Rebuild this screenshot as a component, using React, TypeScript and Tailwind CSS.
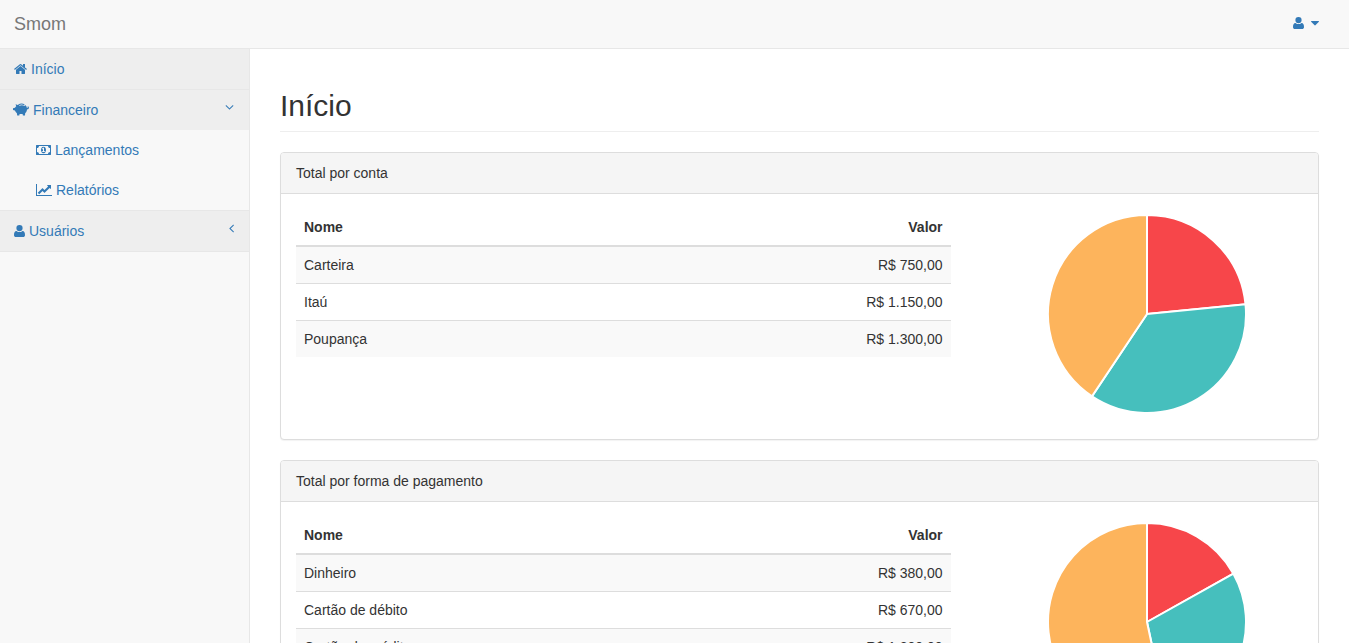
import type { ReactNode } from "react";

const ICONS = {
  home: {
    box: "64 0 1664 1792",
    d: "M1472 992v480q0 26-19 45t-45 19h-384v-384h-256v384h-384q-26 0-45-19t-19-45v-480q0-1 .5-3t.5-3l575-474 575 474q1 2 1 6zm223-69l-62 74q-8 9-21 11h-3q-13 0-21-7l-692-577-692 577q-12 8-24 7-13-2-21-11l-62-74q-8-10-7-23.5t11-21.5l719-599q32-26 76-26t76 26l244 204v-195q0-14 9-23t23-9h192q14 0 23 9t9 23v408l219 182q10 8 11 21.5t-7 23.5z",
  },
  user: {
    box: "0 0 11 14",
    d: "M5.5 1a3.1 3.1 0 0 1 3.1 3.2C8.6 6 7.3 7.3 5.5 7.3S2.4 6 2.4 4.2A3.1 3.1 0 0 1 5.5 1zM2.6 6.9C3.4 7.7 4.4 8.1 5.5 8.1S7.600 7.700 8.400 6.900C10.400 7 11 8.800 11 10.900C11 12.200 10.200 13 9 13H2C.8 13 0 12.200 0 10.900C0 8.800 .6 7 2.600 6.900z",
  },
  money: {
    box: "0 0 1920 1792",
    d: "M768 1152h384v-96h-128v-448h-114l-148 137 77 80q42-37 55-57h2v288h-128v96zm512-256q0 70-21 142t-59.5 134-101.5 101-138 39-138-39-101.5-101-59.5-134-21-142 21-142 59.5-134 101.5-101 138-39 138 39 101.5 101 59.5 134 21 142zm512 256v-512q-106 0-181-75t-75-181h-1152q0 106-75 181t-181 75v512q106 0 181 75t75 181h1152q0-106 75-181t181-75zm128-832v1152q0 26-19 45t-45 19h-1792q-26 0-45-19t-19-45v-1152q0-26 19-45t45-19h1792q26 0 45 19t19 45z",
  },
  chart: {
    box: "0 0 2048 1792",
    d: "M2048 1536v128h-2048v-1536h128v1408h1920zm-128-1248v435q0 21-19.5 29.5t-35.5-7.5l-121-121-633 633q-10 10-23 10t-23-10l-233-233-416 416-192-192 585-585q10-10 23-10t23 10l233 233 464-464-121-121q-16-16-7.5-35.5t29.5-19.5h435q14 0 23 9t9 23z",
  },
  down: {
    box: "320 0 1152 1792",
    d: "M1395 736q0 13-10 23l-466 466q-10 10-23 10t-23-10l-466-466q-10-10-10-23t10-23l50-50q10-10 23-10t23 10l393 393 393-393q10-10 23-10t23 10l50 50q10 10 10 23z",
  },
  left: {
    box: "576 0 640 1792",
    d: "M1203 544q0 13-10 23l-393 393 393 393q10 10 10 23t-10 23l-50 50q-10 10-23 10t-23-10l-466-466q-10-10-10-23t10-23l466-466q10-10 23-10t23 10l50 50q10 10 10 23z",
  },
  caret: {
    box: "384 0 1024 1792",
    d: "M1408 704q0 26-19 45l-448 448q-19 19-45 19t-45-19l-448-448q-19-19-19-45t19-45 45-19h896q26 0 45 19t19 45z",
  },
  piggy: {
    box: "0 0 16 14",
    d: "M0 5.2 L2 4.7 C2.3 4.1 2.7 3.600 3.200 3.200 L2.600 1.300 L4.800 1.900 L5.500 1.500 C7.200 .2 10 .2 11.600 1.500 L11.200 2.300 C9.600 1.200 7.600 1.200 6 2.200 L6.300 2.800 C8 1.900 10 2 11.600 2.900 L12.200 2.100 C13.200 2.900 13.700 3.900 13.900 5 L14.600 4.900 L14.500 3.400 L16 3.700 L15.600 5.900 L14 6.400 C13.900 7.900 13.300 9.200 12.200 10 L12 12.500 L9.900 12.500 L9.600 11.100 L6.600 11.100 L6.300 12.500 L4.200 12.500 L3.900 10.200 C3 9.600 2.300 8.700 1.900 7.600 L0 7.100 Z",
  },
};

function Icon({ name, className = "" }: { name: keyof typeof ICONS; className?: string }) {
  const icon = ICONS[name];
  return (
    <svg viewBox={icon.box} aria-hidden="true" className={`h-3.5 w-auto shrink-0 fill-current ${className}`}>
      <path d={icon.d} />
    </svg>
  );
}

const COLORS = ["#F7464A", "#46BFBD", "#FDB45C"];

function Pie({ values }: { values: number[] }) {
  const total = values.reduce((a, b) => a + b, 0);
  const point = (v: number) => {
    const angle = (v / total) * 2 * Math.PI;
    return `${100 + 99 * Math.sin(angle)} ${100 - 99 * Math.cos(angle)}`;
  };
  let sum = 0;
  return (
    <svg viewBox="0 0 200 200" className="size-[200px]" role="img" aria-label="Gráfico de pizza">
      {values.map((v, i) => {
        const start = point(sum);
        sum += v;
        return (
          <path
            key={i}
            d={`M100 100L${start}A99 99 0 ${v > total / 2 ? 1 : 0} 1 ${point(sum)}Z`}
            fill={COLORS[i]}
            stroke="#fff"
            strokeWidth="2"
          />
        );
      })}
    </svg>
  );
}

type Row = { name: string; value: number };

function money(v: number) {
  return "R$ " + String(v).replace(/\B(?=(\d{3})+$)/g, ".") + ",00";
}

function Panel({ title, rows }: { title: string; rows: Row[] }) {
  return (
    <section className="mb-5 rounded border border-[#ddd] bg-white shadow-[0_1px_1px_rgba(0,0,0,0.05)]">
      <h2 className="rounded-t-[3px] border-b border-[#ddd] bg-[#f5f5f5] px-[15px] py-2.5">{title}</h2>
      <div className="flex items-start p-[15px]">
        <table className="w-[65%]">
          <thead>
            <tr className="border-b-2 border-[#ddd]">
              <th className="p-2 text-left font-bold">Nome</th>
              <th className="p-2 text-right font-bold">Valor</th>
            </tr>
          </thead>
          <tbody>
            {rows.map((r) => (
              <tr key={r.name} className="border-t border-[#ddd] odd:bg-[#f9f9f9]">
                <td className="p-2">{r.name}</td>
                <td className="p-2 text-right">{money(r.value)}</td>
              </tr>
            ))}
          </tbody>
        </table>
        <div className="flex flex-1 justify-center pt-[5px] pb-2.5 pl-10">
          <Pie values={rows.map((r) => r.value)} />
        </div>
      </div>
    </section>
  );
}

function NavLink({ icon, label, className, end }: { icon: keyof typeof ICONS; label: string; className: string; end?: ReactNode }) {
  return (
    <a href="#" className={`flex items-center py-2.5 pr-[15px] ${className}`}>
      <Icon name={icon} className="mr-1" />
      {label}
      {end}
    </a>
  );
}

const ACCOUNTS: Row[] = [
  { name: "Carteira", value: 750 },
  { name: "Itaú", value: 1150 },
  { name: "Poupança", value: 1300 },
];

const PAYMENTS: Row[] = [
  { name: "Dinheiro", value: 380 },
  { name: "Cartão de débito", value: 670 },
  { name: "Cartão de crédito", value: 1200 },
];

export default function App() {
  return (
    <div className="flex min-h-screen flex-col bg-[#f8f8f8] font-['Liberation_Sans',Arial,sans-serif] text-sm/5 text-[#333]">
      <header className="flex h-[49px] items-center justify-between border-b border-[#e7e7e7] pr-[30px] pl-3.5">
        <a href="#" className="text-lg/5 text-[#777]">Smom</a>
        <button type="button" aria-label="Conta do usuário" className="flex items-center gap-[7px] pb-0.5 text-[#337ab7]">
          <Icon name="user" />
          <Icon name="caret" />
        </button>
      </header>
      <div className="flex flex-1">
        <nav className="w-[250px] shrink-0 border-r border-[#e7e7e7] text-[#337ab7]">
          <ul>
            <li className="border-b border-[#e7e7e7]">
              <NavLink icon="home" label="Início" className="bg-[#eee] pl-3.5" />
            </li>
            <li className="border-b border-[#e7e7e7]">
              <NavLink icon="piggy" label="Financeiro" className="bg-[#eee] pl-[13px]" end={<Icon name="down" className="mb-1.5 ml-auto" />} />
              <ul>
                <li><NavLink icon="money" label="Lançamentos" className="pl-9" /></li>
                <li><NavLink icon="chart" label="Relatórios" className="pl-9" /></li>
              </ul>
            </li>
            <li className="border-b border-[#e7e7e7]">
              <NavLink icon="user" label="Usuários" className="bg-[#eee] pl-3.5" end={<Icon name="left" className="mb-1.5 ml-auto" />} />
            </li>
          </ul>
        </nav>
        <main className="min-w-0 flex-1 bg-white px-[30px]">
          <h1 className="mt-10 mb-5 border-b border-[#eee] pb-[9px] text-[30px]/[33px]">Início</h1>
          <Panel title="Total por conta" rows={ACCOUNTS} />
          <Panel title="Total por forma de pagamento" rows={PAYMENTS} />
        </main>
      </div>
    </div>
  );
}
